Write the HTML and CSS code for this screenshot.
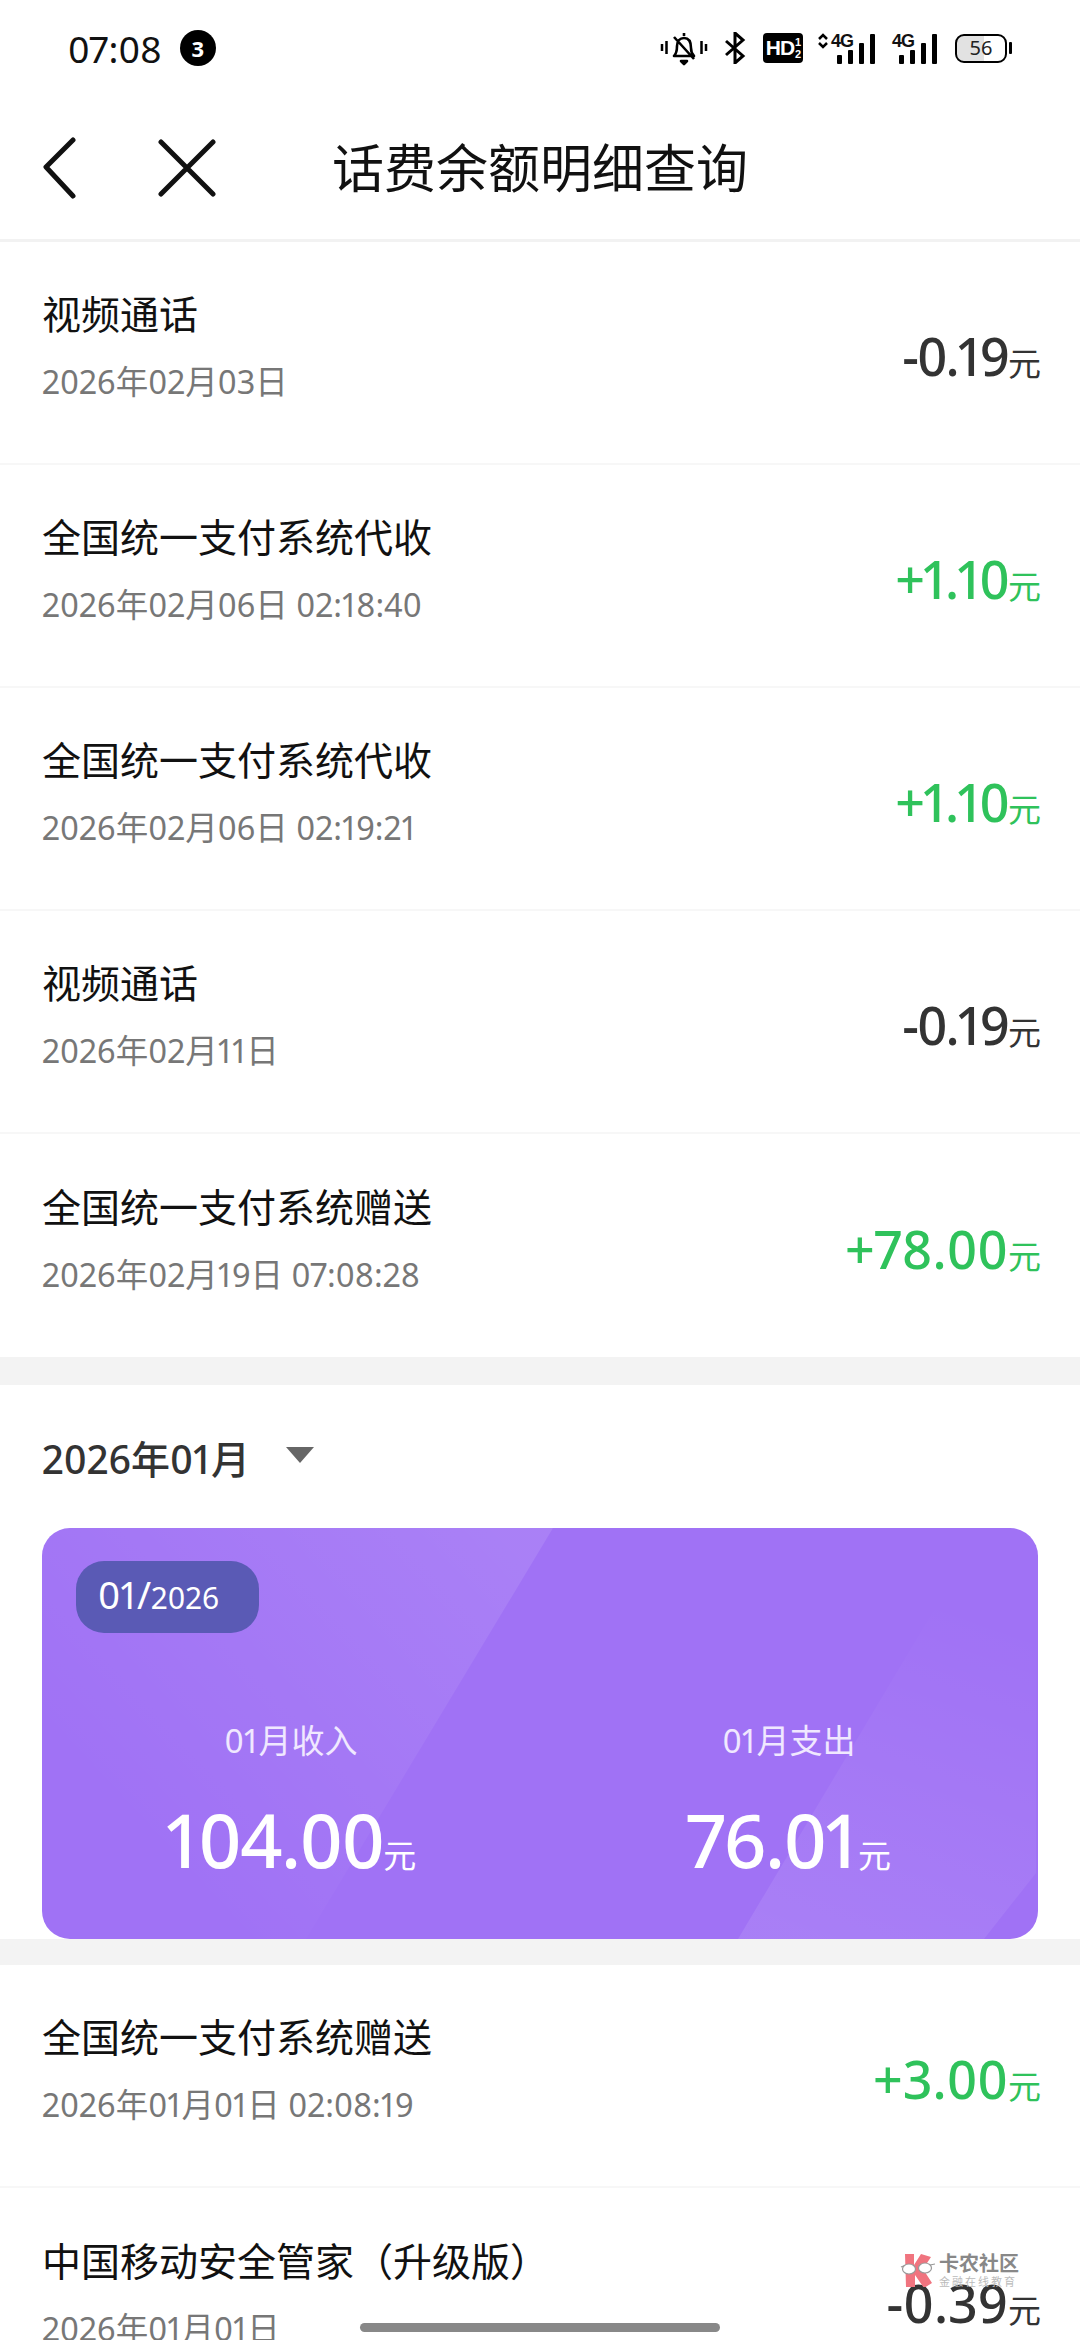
FILE: index.html
```html
<!DOCTYPE html>
<html lang="zh-CN">
<head>
  <meta charset="UTF-8">
  <title>话费余额明细查询</title>
  <link rel="stylesheet" href="styles.css">
</head>
<body>

  <div class="status-bar">
    <div class="status-left">
      <span class="clock">07:08</span>
      <span class="badge">3</span>
    </div>
    <div class="status-right">
      <svg class="ic-bell" width="48" height="36" viewBox="0 0 48 36">
        <path d="M2 14v7M6.500 11v13M41.500 11v13M46 14v7" stroke="#000" stroke-width="2.500" fill="none"/>
        <path d="M24 3v3M14 26c3-3 3-6 3-10 0-5 3-8 7-8s7 3 7 10c0 4 1 6 3 8zM14 7l20 22M21 31h6l-3 3z" stroke="#000" stroke-width="2.600" fill="none" stroke-linejoin="round"/>
      </svg>
      <svg class="ic-bt" width="22" height="32" viewBox="0 0 22 32">
        <path d="M2 9l17 15-8 7V1l8 7L2 23" stroke="#000" stroke-width="3" fill="none"/>
      </svg>
      <span class="hd">HD<span class="hd-frac">1<br>2</span></span>
      <div class="signal signal-updown">
        <svg class="ic-updown" width="10" height="16" viewBox="0 0 10 16">
          <path d="M1 6l4-4 4 4M1 10l4 4 4-4" stroke="#000" stroke-width="2.500" fill="none"/>
        </svg>
        <span class="net">4G</span>
        <span class="bars"><i class="b1"></i><i class="b2"></i><i class="b3"></i><i class="b4"></i></span>
      </div>
      <div class="signal">
        <span class="net">4G</span>
        <span class="bars"><i class="b1"></i><i class="b2"></i><i class="b3"></i><i class="b4"></i></span>
      </div>
      <div class="battery">
        <div class="batt-body"><span>56</span></div>
        <div class="batt-tip"></div>
      </div>
    </div>
  </div>

  <div class="nav-bar">
    <svg class="ic-back" width="36" height="62" viewBox="0 0 36 62">
      <path d="M32 3L5 30l27 29" stroke="#111" stroke-width="5" fill="none" stroke-linecap="round" stroke-linejoin="round"/>
    </svg>
    <svg class="ic-close" width="58" height="58" viewBox="0 0 58 58">
      <path d="M3 3l52 52M55 3L3 55" stroke="#111" stroke-width="5" fill="none" stroke-linecap="round"/>
    </svg>
    <h1 class="nav-title">话费余额明细查询</h1>
  </div>

  <div class="list">
    <div class="row">
      <div class="row-info"><div class="row-name">视频通话</div><div class="row-date">2026年02月03日</div></div>
      <div class="amount"><b class="tight">-0.19</b>元</div>
    </div>
    <div class="row">
      <div class="row-info"><div class="row-name">全国统一支付系统代收</div><div class="row-date">2026年02月06日 02:18:40</div></div>
      <div class="amount plus"><b class="tight">+1.10</b>元</div>
    </div>
    <div class="row">
      <div class="row-info"><div class="row-name">全国统一支付系统代收</div><div class="row-date">2026年02月06日 02:19:21</div></div>
      <div class="amount plus"><b class="tight">+1.10</b>元</div>
    </div>
    <div class="row">
      <div class="row-info"><div class="row-name">视频通话</div><div class="row-date">2026年02月11日</div></div>
      <div class="amount"><b class="tight">-0.19</b>元</div>
    </div>
    <div class="row">
      <div class="row-info"><div class="row-name">全国统一支付系统赠送</div><div class="row-date">2026年02月19日 07:08:28</div></div>
      <div class="amount plus"><b>+78.00</b>元</div>
    </div>
  </div>

  <div class="gap"></div>

  <div class="month">
    <div class="month-head">
      <span class="month-name">2026年01月</span>
      <span class="caret"></span>
    </div>
    <div class="card">
      <svg class="card-bg" width="994" height="411" viewBox="0 0 994 411">
        <defs>
          <linearGradient id="facet1" x1="0.15" y1="0.7" x2="0.95" y2="0.1">
            <stop offset="0" stop-color="#fff" stop-opacity="0"/>
            <stop offset="1" stop-color="#fff" stop-opacity="0.1"/>
          </linearGradient>
          <linearGradient id="facet2" x1="0.3" y1="1" x2="0.6" y2="0">
            <stop offset="0" stop-color="#fff" stop-opacity="0.09"/>
            <stop offset="1" stop-color="#fff" stop-opacity="0"/>
          </linearGradient>
        </defs>
        <path d="M0 0H511L264 411H0z" fill="url(#facet1)"/>
        <path d="M696 411L905 60H994V345L942 411z" fill="url(#facet2)"/>
      </svg>
      <div class="pill"><span class="pill-month">01/</span><span class="pill-year">2026</span></div>
      <div class="totals">
        <div class="total">
          <div class="total-label">01月收入</div>
          <div class="total-value"><b>104.00</b>元</div>
        </div>
        <div class="total">
          <div class="total-label">01月支出</div>
          <div class="total-value"><b>76.01</b>元</div>
        </div>
      </div>
    </div>
  </div>

  <div class="gap gap-short"></div>

  <div class="list">
    <div class="row">
      <div class="row-info"><div class="row-name">全国统一支付系统赠送</div><div class="row-date">2026年01月01日 02:08:19</div></div>
      <div class="amount plus"><b>+3.00</b>元</div>
    </div>
    <div class="row">
      <div class="row-info"><div class="row-name">中国移动安全管家（升级版）</div><div class="row-date">2026年01月01日</div></div>
      <div class="amount"><b>-0.39</b>元</div>
    </div>
  </div>

  <div class="watermark">
    <svg class="wm-logo" width="36" height="34" viewBox="0 0 36 34">
      <path d="M5 1h9v11L21 1l10 3-8 12 9 14-8 5-9-13v12H6z" fill="#f0747f"/>
      <path d="M1 14l5-2M35 11l-5 1" stroke="#999" stroke-width="1.200"/>
      <ellipse cx="9" cy="16" rx="6.500" ry="5" fill="#fff" stroke="#999" stroke-width="1.200"/>
      <ellipse cx="25" cy="15" rx="6.500" ry="5" fill="#fff" stroke="#999" stroke-width="1.200"/>
    </svg>
    <div class="wm-text">
      <div class="wm-title">卡农社区</div>
      <div class="wm-sub">金融在线教育</div>
    </div>
  </div>

  <div class="home-bar"></div>

</body>
</html>
```

FILE: styles.css
```css
* {
  box-sizing: border-box;
}
html, body {
  margin: 0;
  padding: 0;
}
body {
  position: relative;
  width: 1080px;
  height: 2340px;
  overflow: hidden;
  background-color: #fff;
  font-family: "Noto Sans", "Noto Sans CJK SC", sans-serif;
  font-variant-numeric: proportional-nums;
  color: #111;
}

/* status bar */
.status-bar {
  display: flex;
  justify-content: space-between;
  align-items: center;
  height: 96px;
  padding: 0 68px;
}
.status-left {
  display: flex;
  align-items: center;
  gap: 18px;
}
.clock {
  font-size: 37px;
  color: #111;
}
.badge {
  display: flex;
  align-items: center;
  justify-content: center;
  width: 36px;
  height: 36px;
  border-radius: 50%;
  background-color: #000;
  color: #fff;
  font-size: 22px;
  font-weight: bold;
}
.status-right {
  display: flex;
  align-items: center;
}
.ic-bell {
  display: block;
  margin-right: 16px;
}
.ic-bt {
  display: block;
  margin-right: 17px;
}
.hd {
  display: flex;
  align-items: center;
  justify-content: center;
  width: 40px;
  height: 30px;
  margin-right: 15px;
  border-radius: 4px;
  background-color: #000;
  color: #fff;
  font-family: "Liberation Sans", sans-serif;
  font-size: 21px;
  font-weight: bold;
  letter-spacing: -1px;
}
.hd-frac {
  font-size: 11px;
  line-height: 12px;
  margin-left: 1px;
}
.signal {
  position: relative;
  display: flex;
  align-items: flex-start;
  width: 45px;
  height: 32px;
  margin-right: 18px;
}
.signal-updown {
  width: 57px;
  margin-right: 17px;
}
.ic-updown {
  display: block;
  margin: 1px 3px 0 0;
}
.net {
  font-family: "Liberation Sans", sans-serif;
  font-size: 18px;
  line-height: 18px;
  font-weight: bold;
  letter-spacing: -1px;
}
.bars {
  position: absolute;
  right: 0;
  bottom: 0;
  display: flex;
  align-items: flex-end;
  gap: 6px;
}
.bars i {
  display: block;
  width: 5px;
  border-radius: 1px;
  background-color: #000;
}
.b1 { height: 9px; }
.b2 { height: 14px; }
.b3 { height: 21px; }
.b4 { height: 30px; }
.battery {
  display: flex;
  align-items: center;
}
.batt-body {
  display: flex;
  align-items: center;
  justify-content: center;
  width: 52px;
  height: 29px;
  border: 2.500px solid #000;
  border-radius: 9px;
  background: linear-gradient(to right, #e2e2e2 56%, #fff 56%);
}
.batt-body span {
  font-size: 20px;
  line-height: 24px;
  color: #222;
}
.batt-tip {
  width: 3px;
  height: 12px;
  margin-left: 2px;
  background-color: #000;
  border-radius: 1px;
}

/* nav */
.nav-bar {
  display: flex;
  align-items: center;
  height: 146px;
  padding-left: 41px;
  border-bottom: 3px solid #f2f2f2;
}
.ic-close {
  margin-left: 81px;
}
.nav-title {
  margin: 0 0 0 116px;
  font-size: 52px;
  font-weight: normal;
  line-height: 60px;
  color: #111;
}

/* rows */
.row {
  display: flex;
  align-items: center;
  justify-content: space-between;
  height: 223px;
  padding: 0 39px 0 42px;
  border-bottom: 2px solid #f7f7f7;
}
.list .row:last-child {
  border-bottom: none;
}
.row-info {
  margin-top: -13px;
}
.row-name {
  font-size: 39px;
  line-height: 52px;
  color: #111;
}
.row-date {
  margin-top: 19px;
  font-size: 32.500px;
  line-height: 46px;
  color: #777;
}
.amount {
  margin-top: 5px;
  font-size: 33px;
  color: #333;
}
.amount b {
  font-size: 52px;
  font-weight: 500;
}
.amount b.tight {
  letter-spacing: -2px;
}
.amount.plus {
  color: #2fc25b;
}

.gap {
  height: 28px;
  background-color: #f3f3f3;
}
.gap-short {
  height: 26px;
}

/* month block */
.month {
  padding: 0 42px;
}
.month-head {
  display: flex;
  align-items: center;
  height: 143px;
}
.month-name {
  font-size: 39px;
  font-weight: 500;
  color: #333;
}
.caret {
  width: 0;
  height: 0;
  margin-left: 36px;
  margin-bottom: 4px;
  border-left: 14px solid transparent;
  border-right: 14px solid transparent;
  border-top: 16px solid #666;
}
.card {
  position: relative;
  height: 411px;
  border-radius: 28px;
  overflow: hidden;
  background-color: #a072f5;
  color: #fff;
}
.card-bg {
  position: absolute;
  left: 0;
  top: 0;
}
.pill {
  position: relative;
  display: flex;
  align-items: baseline;
  width: 183px;
  height: 72px;
  margin: 33px 0 0 34px;
  padding-left: 22px;
  border-radius: 28px;
  background-color: #5a5ab5;
  line-height: 66px;
}
.pill-month {
  font-size: 38px;
}
.pill-year {
  font-size: 30px;
}
.totals {
  position: relative;
  display: flex;
  margin-top: 85px;
}
.total {
  flex: 1;
  text-align: center;
}
.total-label {
  font-size: 33px;
  line-height: 46px;
  color: #f0e8ff;
}
.total-value {
  margin-top: 28px;
  font-size: 33px;
  line-height: 96px;
}
.total-value b {
  font-size: 74px;
  font-weight: 500;
  letter-spacing: -1.700px;
}

/* overlays */
.watermark {
  position: absolute;
  left: 900px;
  top: 2253px;
  display: flex;
  gap: 3px;
}
.wm-logo {
  display: block;
}
.wm-title {
  font-size: 20px;
  line-height: 22px;
  font-weight: bold;
  color: #888;
}
.wm-sub {
  font-size: 11px;
  line-height: 14px;
  letter-spacing: 2px;
  color: #bbb;
}
.home-bar {
  position: absolute;
  left: 360px;
  top: 2323px;
  width: 360px;
  height: 9px;
  border-radius: 5px;
  background-color: #888;
}
```
